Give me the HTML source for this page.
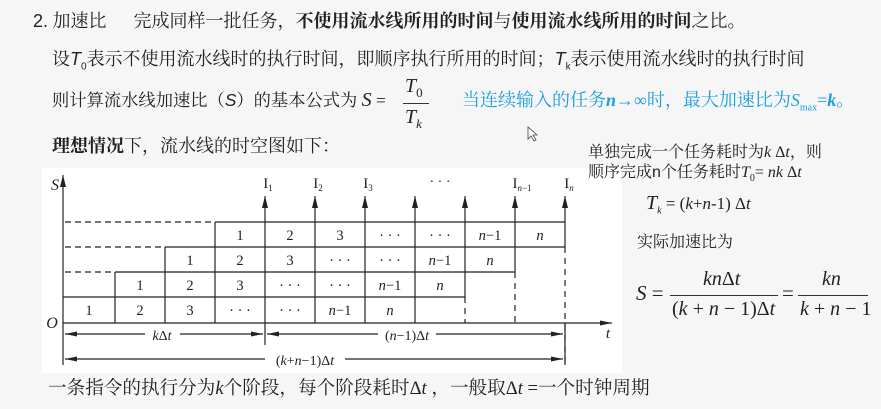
<!DOCTYPE html>
<html><head><meta charset="utf-8"><style>
body{margin:0;width:881px;height:409px;background:#f6f6f6;position:relative;overflow:hidden;font-family:"Liberation Serif","Noto Serif CJK SC","Noto Sans CJK SC",serif;color:#222}
.t{position:absolute;white-space:nowrap;font-size:16px;line-height:18px}
.L{font-size:18px}
i{font-family:"Liberation Serif",serif}
.s{font-family:"Liberation Sans",sans-serif}
sub{font-size:10px}
b{font-weight:bold}
</style></head><body>
<div style="position:absolute;left:42px;top:168px;width:580px;height:205px;background:#fff"></div>
<div class="t L" style="left:33px;top:12px"><span class="s">2.</span> 加速比&nbsp;&nbsp;&nbsp;&nbsp;&nbsp; 完成同样一批任务，<b>不使用流水线所用的时间</b>与<b>使用流水线所用的时间</b>之比。</div>
<div class="t L" style="left:52px;top:50px">设<i class="s">T</i><sub class="s">0</sub>表示不使用流水线时的执行时间，即顺序执行所用的时间；<i class="s">T</i><sub class="s">k</sub>表示使用流水线时的执行时间</div>
<div class="t" style="left:52px;top:91px;font-size:17.3px">则计算流水线加速比（<i class="s">S</i>）的基本公式为 <i style="font-size:20px">S</i> =</div>
<div class="t" style="left:405px;top:77px;font-size:20px"><i>T</i><sub style="font-size:13px">0</sub></div>
<div style="position:absolute;left:403px;top:103px;width:26px;border-top:1px solid #333"></div>
<div class="t" style="left:405px;top:108px;font-size:20px"><i>T</i><sub style="font-size:13px"><i>k</i></sub></div>
<div class="t L" style="left:462px;top:91px;color:#1a9fe0">当连续输入的任务<i><b>n</b></i>→∞时，最大加速比为<i>S</i><sub>max</sub>=<i><b>k</b></i>。</div>
<div class="t L" style="left:52px;top:137px"><b>理想情况</b>下，流水线的时空图如下：</div>
<div class="t" style="left:588px;top:144px">单独完成一个任务耗时为<i>k</i> Δ<i>t</i>，则</div>
<div class="t" style="left:588px;top:164px">顺序完成<span class="s">n</span>个任务耗时<i>T</i><sub>0</sub>= <i>nk</i> Δ<i>t</i></div>
<div class="t" style="left:646px;top:194px;font-size:17px"><i style="font-size:20px">T</i><sub><i>k</i></sub> = (<i>k</i>+<i>n</i>-1) Δ<i>t</i></div>
<div class="t" style="left:637px;top:234px">实际加速比为</div>
<div class="t" style="left:636px;top:284px;font-size:21px"><i>S</i> =</div>
<div class="t" style="left:703px;top:270px;font-size:20px"><i>kn</i>Δ<i>t</i></div>
<div style="position:absolute;left:670px;top:295px;width:108px;border-top:1px solid #333"></div>
<div class="t" style="left:672px;top:300px;font-size:20px">(<i>k</i> + <i>n</i> − 1)Δ<i>t</i></div>
<div class="t" style="left:782px;top:284px;font-size:21px">=</div>
<div class="t" style="left:822px;top:270px;font-size:20px"><i>kn</i></div>
<div style="position:absolute;left:798px;top:295px;width:70px;border-top:1px solid #333"></div>
<div class="t" style="left:800px;top:300px;font-size:20px"><i>k</i> + <i>n</i> − 1</div>
<div class="t" style="left:48px;top:380px;font-size:18.6px">一条指令的执行分为<i>k</i>个阶段，每个阶段耗时Δ<i>t</i> ，一般取Δ<i>t</i> =一个时钟周期</div>
<svg style="position:absolute;left:0;top:0" width="881" height="409" font-family="Liberation Serif,serif" font-size="14">
<defs>
<marker id="a" markerWidth="12" markerHeight="8" refX="12" refY="3.5" orient="auto-start-reverse" markerUnits="userSpaceOnUse"><path d="M0,0.5 L12,3.5 L0,6.5z" fill="#222"/></marker>
<marker id="h" markerWidth="12" markerHeight="6" refX="12" refY="3" orient="auto-start-reverse" markerUnits="userSpaceOnUse"><path d="M0,0.5 L12,3 L0,5.5z" fill="#222"/></marker></defs>
<g stroke="#222" stroke-width="1.2" fill="none">
<line x1="63" y1="365" x2="63" y2="175" marker-end="url(#a)"/>
<line x1="63" y1="323" x2="612" y2="323" marker-end="url(#h)"/>
<line x1="63" y1="297" x2="465" y2="297"/>
<line x1="115" y1="272" x2="515" y2="272"/>
<line x1="165" y1="247" x2="565" y2="247"/>
<line x1="215" y1="222" x2="565" y2="222"/>
<line x1="115" y1="272" x2="115" y2="323"/>
<line x1="165" y1="247" x2="165" y2="323"/>
<line x1="215" y1="222" x2="215" y2="323"/>
<line x1="265" y1="345" x2="265" y2="196" marker-end="url(#a)"/>
<line x1="315" y1="323" x2="315" y2="196" marker-end="url(#a)"/>
<line x1="365" y1="323" x2="365" y2="196" marker-end="url(#a)"/>
<line x1="415" y1="323" x2="415" y2="196" marker-end="url(#a)"/>
<line x1="465" y1="297" x2="465" y2="196" marker-end="url(#a)"/>
<line x1="515" y1="272" x2="515" y2="196" marker-end="url(#a)"/>
<line x1="565" y1="247" x2="565" y2="196" marker-end="url(#a)"/>
<line x1="565" y1="247" x2="565" y2="365" stroke-dasharray="6,5"/>
<line x1="515" y1="272" x2="515" y2="323" stroke-dasharray="6,5"/>
<line x1="465" y1="297" x2="465" y2="323" stroke-dasharray="6,5"/>
<line x1="565" y1="323" x2="565" y2="365"/>
<g stroke-dasharray="6,4"><line x1="65" y1="222" x2="215" y2="222"/><line x1="65" y1="247" x2="165" y2="247"/><line x1="65" y1="272" x2="115" y2="272"/></g>
<line x1="65" y1="334" x2="145" y2="334" marker-start="url(#h)"/><line x1="180" y1="334" x2="263" y2="334" marker-end="url(#h)"/>
<line x1="267" y1="334" x2="378" y2="334" marker-start="url(#h)"/><line x1="436" y1="334" x2="563" y2="334" marker-end="url(#h)"/>
<line x1="65" y1="359" x2="265" y2="359" marker-start="url(#h)"/><line x1="345" y1="359" x2="563" y2="359" marker-end="url(#h)"/>
</g>
<g fill="#222" text-anchor="middle">
<text x="55" y="190" font-style="italic" font-size="16">S</text>
<text x="52" y="328" font-style="italic" font-size="16">O</text>
<text x="608" y="338" font-style="italic" font-size="15">t</text>
<text x="162" y="340" font-size="14"><tspan font-style="italic">k</tspan>Δ<tspan font-style="italic">t</tspan></text>
<text x="407" y="340" font-size="14">(<tspan font-style="italic">n</tspan>−1)Δ<tspan font-style="italic">t</tspan></text>
<text x="305" y="365" font-size="14">(<tspan font-style="italic">k</tspan>+<tspan font-style="italic">n</tspan>−1)Δ<tspan font-style="italic">t</tspan></text>
<text x="268" y="188" font-size="15">I<tspan font-size="9" dy="3">1</tspan></text>
<text x="318" y="188" font-size="15">I<tspan font-size="9" dy="3">2</tspan></text>
<text x="368" y="188" font-size="15">I<tspan font-size="9" dy="3">3</tspan></text>
<text x="440" y="186" font-size="14">· · ·</text>
<text x="522" y="188" font-size="15">I<tspan font-size="9" dy="3" font-style="italic">n</tspan><tspan font-size="9">−1</tspan></text>
<text x="569" y="188" font-size="15">I<tspan font-size="9" dy="3" font-style="italic">n</tspan></text>
<g font-size="14.5">
<text x="89" y="315">1</text><text x="140" y="315">2</text><text x="190" y="315">3</text><text x="240" y="315">· · ·</text><text x="290" y="315">· · ·</text><text x="340" y="315"><tspan font-style="italic">n</tspan>−1</text><text x="390" y="315" font-style="italic">n</text>
<text x="140" y="290">1</text><text x="190" y="290">2</text><text x="240" y="290">3</text><text x="290" y="290">· · ·</text><text x="340" y="290">· · ·</text><text x="390" y="290"><tspan font-style="italic">n</tspan>−1</text><text x="440" y="290" font-style="italic">n</text>
<text x="190" y="265">1</text><text x="240" y="265">2</text><text x="290" y="265">3</text><text x="340" y="265">· · ·</text><text x="390" y="265">· · ·</text><text x="440" y="265"><tspan font-style="italic">n</tspan>−1</text><text x="490" y="265" font-style="italic">n</text>
<text x="240" y="240">1</text><text x="290" y="240">2</text><text x="340" y="240">3</text><text x="390" y="240">· · ·</text><text x="440" y="240">· · ·</text><text x="490" y="240"><tspan font-style="italic">n</tspan>−1</text><text x="540" y="240" font-style="italic">n</text>
</g></g>
<path d="M528,127 L528,139 L531,136 L534,141 L536,140 L533,135 L537,135Z" fill="#fff" stroke="#444" stroke-width="0.8"/>
</svg>
</body></html>
